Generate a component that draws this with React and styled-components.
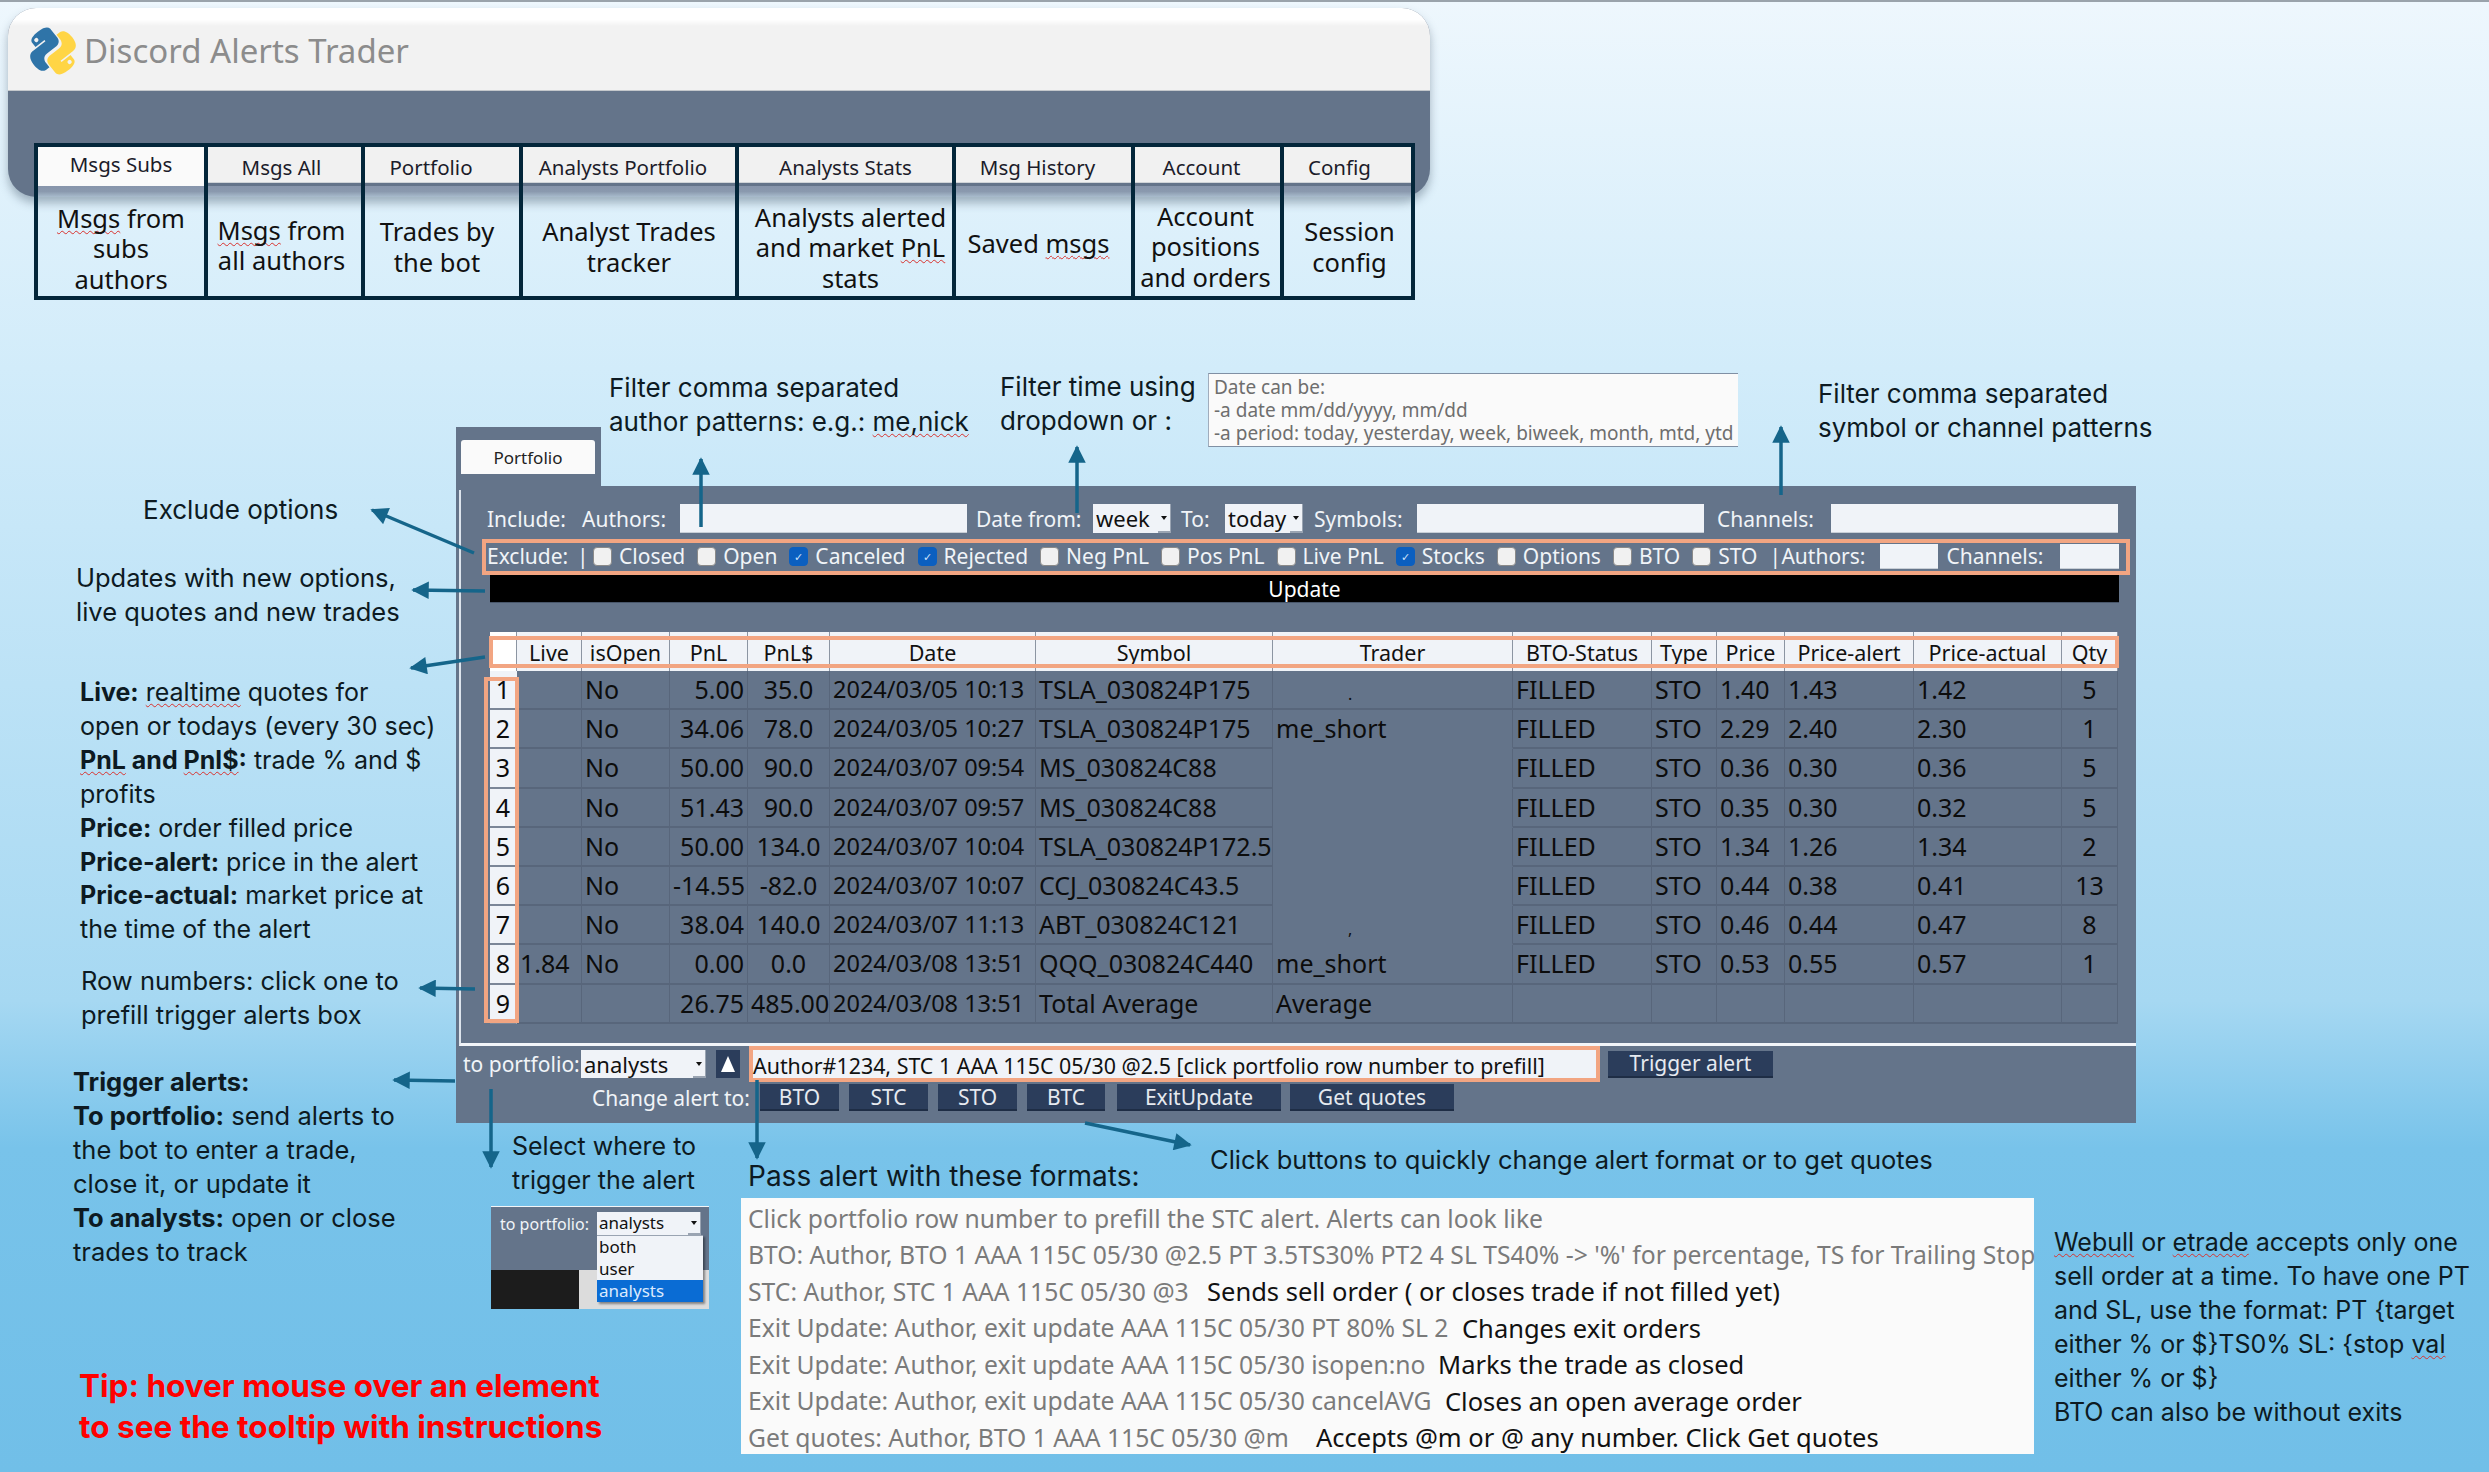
import React from 'react';
import styled, { createGlobalStyle } from 'styled-components';

const UI_FONT = '"Noto Sans", "Open Sans", sans-serif';
const NOTE_FONT = 'Inter, "Noto Sans", sans-serif';
const SLATE = '#64748a';
const ORANGE = '#f2a582';
const ARROW = '#15658a';

const GlobalStyle = createGlobalStyle`
  html, body { margin: 0; padding: 0; }
  body { font-family: ${UI_FONT}; background: #72bfe8; }
`;

// textPad is left, right, top, bottom padding that nudges the description in its cell
const LEGEND = [
  { tab: 'Msgs Subs', w: 170, active: true, tabPad: 0, textPad: [0, 0, 4, 0], text: <><Typo>Msgs</Typo> from<br />subs<br />authors</> },
  { tab: 'Msgs All', w: 157, tabPad: 6, textPad: [0, 6, 0, 3], text: <><Typo>Msgs</Typo> from<br />all authors</> },
  { tab: 'Portfolio', w: 158, tabPad: 22, textPad: [0, 10, 0, 0], text: <>Trades by<br />the bot</> },
  { tab: 'Analysts Portfolio', w: 216, tabPad: 12, textPad: [0, 0, 0, 0], text: <>Analyst Trades<br />tracker</> },
  { tab: 'Analysts Stats', w: 217, tabPad: 0, textPad: [10, 0, 2, 0], text: <>Analysts alerted<br />and market <Typo>PnL</Typo><br />stats</> },
  { tab: 'Msg History', w: 179, tabPad: 12, textPad: [0, 10, 0, 6], text: <>Saved <Typo>msgs</Typo></> },
  { tab: 'Account', w: 149, tabPad: 12, textPad: [0, 4, 0, 0], text: <>Account<br />positions<br />and orders</> },
  { tab: 'Config', w: 131, tabPad: 16, textPad: [4, 0, 0, 0], text: <>Session<br />config</> },
];

const EXCLUDES = [
  ['Closed', false], ['Open', false], ['Canceled', true], ['Rejected', true], ['Neg PnL', false],
  ['Pos PnL', false], ['Live PnL', false], ['Stocks', true], ['Options', false], ['BTO', false], ['STO', false],
];

const COLUMNS = '27px 65px 88px 78px 82px 206px 237px 240px 139px 65px 68px 129px 148px 56px';
const HEADERS = ['', 'Live', 'isOpen', 'PnL', 'PnL$', 'Date', 'Symbol', 'Trader', 'BTO-Status', 'Type', 'Price', 'Price-alert', 'Price-actual', 'Qty'];
const ALIGN = ['center', 'left', 'left', 'right', 'center', 'left', 'left', 'left', 'left', 'left', 'left', 'left', 'left', 'center'];
const DATE_COLUMN = 5;
const TRADER_COLUMN = 7;

const ROWS = [
  ['1', '', 'No', '5.00', '35.0', '2024/03/05 10:13', 'TSLA_030824P175', '', 'FILLED', 'STO', '1.40', '1.43', '1.42', '5'],
  ['2', '', 'No', '34.06', '78.0', '2024/03/05 10:27', 'TSLA_030824P175', 'me_short', 'FILLED', 'STO', '2.29', '2.40', '2.30', '1'],
  ['3', '', 'No', '50.00', '90.0', '2024/03/07 09:54', 'MS_030824C88', '', 'FILLED', 'STO', '0.36', '0.30', '0.36', '5'],
  ['4', '', 'No', '51.43', '90.0', '2024/03/07 09:57', 'MS_030824C88', '', 'FILLED', 'STO', '0.35', '0.30', '0.32', '5'],
  ['5', '', 'No', '50.00', '134.0', '2024/03/07 10:04', 'TSLA_030824P172.5', '', 'FILLED', 'STO', '1.34', '1.26', '1.34', '2'],
  ['6', '', 'No', '-14.55', '-82.0', '2024/03/07 10:07', 'CCJ_030824C43.5', '', 'FILLED', 'STO', '0.44', '0.38', '0.41', '13'],
  ['7', '', 'No', '38.04', '140.0', '2024/03/07 11:13', 'ABT_030824C121', '', 'FILLED', 'STO', '0.46', '0.44', '0.47', '8'],
  ['8', '1.84', 'No', '0.00', '0.0', '2024/03/08 13:51', 'QQQ_030824C440', 'me_short', 'FILLED', 'STO', '0.53', '0.55', '0.57', '1'],
  ['9', '', '', '26.75', '485.00', '2024/03/08 13:51', 'Total Average', 'Average', '', '', '', '', '', ''],
];

// second value is the black hint, third the width the grey sample takes before it
const FORMATS = [
  ['Click portfolio row number to prefill the STC alert. Alerts can look like'],
  ["BTO: Author, BTO 1 AAA 115C 05/30 @2.5 PT 3.5TS30% PT2 4 SL TS40% -> '%' for percentage, TS for Trailing Stop"],
  ['STC: Author, STC 1 AAA 115C 05/30 @3', 'Sends sell order ( or closes trade if not filled yet)', 459],
  ['Exit Update: Author, exit update AAA 115C 05/30 PT 80% SL 2', 'Changes exit orders', 714],
  ['Exit Update: Author, exit update AAA 115C 05/30 isopen:no', 'Marks the trade as closed', 690],
  ['Exit Update: Author, exit update AAA 115C 05/30 cancelAVG', 'Closes an open average order', 697],
  ['Get quotes: Author, BTO 1 AAA 115C 05/30 @m', 'Accepts @m or @ any number. Click Get quotes', 568],
];

const ARROWS = [
  [701, 527, 701, 459], [1077, 513, 1077, 447], [1781, 495, 1781, 427],
  [474, 553, 372, 510], [485, 591, 413, 590], [485, 657, 411, 668],
  [475, 989, 420, 988], [455, 1081, 394, 1080], [491, 1089, 491, 1167],
  [757, 1080, 757, 1158], [1085, 1123, 1190, 1145],
];

function Typo({ children }) {
  return <Squiggle>{children}</Squiggle>;
}

const SNAKE = 'M54.9.9C28.3.9 30 12.5 30 12.5V24.5H55V28H20S3 26 3 52.7s14.8 25.8 14.8 25.8h8.9V66s-.5-14.8 14.6-14.8h25.1s14.1.2 14.1-13.7V14.6S82.7.9 54.9.9zM41 8.9a4.5 4.5 0 1 1 0 9 4.5 4.5 0 0 1 0-9z';

const PythonLogo = () => (
  <LogoSvg viewBox="0 0 110 110">
    <g transform="rotate(-38 55 55)">
      <path fill="#2f74a8" d={SNAKE} />
      <path fill="#ffd545" transform="rotate(180 55 55)" d={SNAKE} />
    </g>
  </LogoSvg>
);

const Arrows = () => (
  <ArrowLayer viewBox="0 0 2489 1472">
    <defs>
      <marker id="head" viewBox="0 0 10 10" refX="9" refY="5" markerWidth="5.5" markerHeight="5" orient="auto">
        <path d="M0 0 L10 5 L0 10 Z" fill={ARROW} />
      </marker>
    </defs>
    {ARROWS.map(([x1, y1, x2, y2]) => (
      <line key={`${x1}-${y1}`} x1={x1} y1={y1} x2={x2} y2={y2} stroke={ARROW} strokeWidth="3.5" markerEnd="url(#head)" />
    ))}
  </ArrowLayer>
);

const Arrowhead = () => (
  <svg width="6" height="5" viewBox="0 0 6 5"><path d="M0 1 H6 L3 5 Z" fill="#111" /></svg>
);

const Legend = () => (
  <LegendGrid>
    {LEGEND.map(item => (
      <LegendColumn key={item.tab} $w={item.w}>
        <TabCell $active={item.active} $pad={item.tabPad}>
          <TabLabel $active={item.active}>{item.tab}</TabLabel>
        </TabCell>
        <TabStrip />
        <LegendText $pad={item.textPad}>
          <div>{item.text}</div>
        </LegendText>
      </LegendColumn>
    ))}
  </LegendGrid>
);

const FilterBar = () => (
  <FilterRow>
    <Label $w={95}>Include:</Label>
    <Label $w={98}>Authors:</Label>
    <TextBox $w={287} />
    <Label $w={117} $ml={9}>Date from:</Label>
    <Select $w={78}>week<Caret><Arrowhead /></Caret></Select>
    <Label $w={44} $ml={10}>To:</Label>
    <Select $w={78}>today<Caret><Arrowhead /></Caret></Select>
    <Label $w={103} $ml={11}>Symbols:</Label>
    <TextBox $w={287} />
    <Label $w={114} $ml={13}>Channels:</Label>
    <TextBox $w={287} />
  </FilterRow>
);

const ExcludeBar = () => (
  <ExcludeRow>
    <Label $w={90}>Exclude:</Label>
    <Label $w={16}>|</Label>
    {EXCLUDES.map(([name, checked]) => (
      <ExcludeItem key={name}>
        <Check $checked={checked}>{checked && '✓'}</Check>
        <Label>{name}</Label>
      </ExcludeItem>
    ))}
    <Label $w={12}>|</Label>
    <Label $w={99}>Authors:</Label>
    <TextBox $w={58} $h={25} />
    <Label $w={114} $ml={8}>Channels:</Label>
    <TextBox $w={59} $h={25} />
  </ExcludeRow>
);

const TradesTable = () => (
  <TableWrap>
    <HeaderRow>
      {HEADERS.map((h, i) => (
        <HeaderCell key={h || 'corner'} $corner={i === 0}>{h}</HeaderCell>
      ))}
    </HeaderRow>
    <RowNumberHighlight />
    {ROWS.map((row, r) => (
      <DataRow key={row[0]}>
        {row.map((value, c) => (
          <DataCell
            key={HEADERS[c] || 'num'}
            $align={ALIGN[c]}
            $index={c === 0}
            $date={c === DATE_COLUMN}
            $noLine={c === TRADER_COLUMN && r > 0 && r < 7}
          >
            {value}
            {c === TRADER_COLUMN && r === 0 && <Tick>.</Tick>}
            {c === TRADER_COLUMN && r === 6 && <Tick>,</Tick>}
          </DataCell>
        ))}
      </DataRow>
    ))}
  </TableWrap>
);

const TriggerBar = () => (
  <>
    <TriggerRow>
      <Label $w={118}>to portfolio:</Label>
      <Select $w={125} $h={28}>analysts<Caret><Arrowhead /></Caret></Select>
      <UpButton><svg width="16" height="18" viewBox="0 0 16 18"><path d="M8 1 L15 17 H1 Z" fill="#fff" /></svg></UpButton>
      <AlertInput>Author#1234, STC 1 AAA 115C 05/30 @2.5 [click portfolio row number to prefill]</AlertInput>
      <ActionButton $w={165} $ml={8}>Trigger alert</ActionButton>
    </TriggerRow>
    <ChangeRow>
      <Label $w={165}>Change alert to:</Label>
      <ActionButton $w={79} $ml={3}>BTO</ActionButton>
      <ActionButton $w={79} $ml={10}>STC</ActionButton>
      <ActionButton $w={79} $ml={10}>STO</ActionButton>
      <ActionButton $w={78} $ml={10}>BTC</ActionButton>
      <ActionButton $w={164} $ml={12}>ExitUpdate</ActionButton>
      <ActionButton $w={164} $ml={9}>Get quotes</ActionButton>
    </ChangeRow>
  </>
);

const DropdownThumb = () => (
  <Thumb>
    <ThumbTop>
      <ThumbLabel>to portfolio:</ThumbLabel>
      <ThumbSelect>analysts<Caret><Arrowhead /></Caret></ThumbSelect>
    </ThumbTop>
    <ThumbBottom>
      <ThumbBlack />
    </ThumbBottom>
    <ThumbMenu>
      <ThumbOption>both</ThumbOption>
      <ThumbOption>user</ThumbOption>
      <ThumbOption $selected>analysts</ThumbOption>
    </ThumbMenu>
  </Thumb>
);

export default function App() {
  return (
    <>
      <GlobalStyle />
      <Canvas>
        <TopLine />
        <AppWindow>
          <TitleBar>
            <PythonLogo />
            <AppTitle>Discord Alerts Trader</AppTitle>
          </TitleBar>
        </AppWindow>
        <Legend />

        <Portfolio>
          <PanelTabBar><PanelTab>Portfolio</PanelTab></PanelTabBar>
          <Panel>
            <Frame>
              <FilterBar />
              <ExcludeBar />
              <UpdateBar>Update</UpdateBar>
              <TradesTable />
            </Frame>
            <TriggerBar />
          </Panel>
        </Portfolio>

        <BottomRow>
          <DropdownThumb />
          <FormatBox>
            {FORMATS.map(([sample, hint, width]) => (
              <FormatLine key={sample}>
                <FormatSample $w={width}>{sample}</FormatSample>
                {hint && <FormatHint>{hint}</FormatHint>}
              </FormatLine>
            ))}
          </FormatBox>
        </BottomRow>

        <DateTip>
          Date can be:<br />-a date mm/dd/yyyy, mm/dd<br />-a period: today, yesterday, week, biweek, month, mtd, ytd
        </DateTip>

        <Note $x={609} $y={371} $size={26}>Filter comma separated<br />author patterns: e.g.: <Squiggle>me,nick</Squiggle></Note>
        <Note $x={1000} $y={370} $size={26}>Filter time using<br />dropdown or :</Note>
        <Note $x={1818} $y={377} $size={26}>Filter comma separated<br />symbol or channel patterns</Note>
        <Note $x={143} $y={493} $size={26}>Exclude options</Note>
        <Note $x={76} $y={561}>Updates with new options,<br />live quotes and new trades</Note>
        <Note $x={80} $y={676} $size={25}>
          <b>Live:</b> <Squiggle>realtime</Squiggle> quotes for<br />
          open or todays (every 30 sec)<br />
          <b><Squiggle>PnL</Squiggle> and <Squiggle>Pnl$</Squiggle>:</b> trade % and $<br />
          profits<br />
          <b>Price:</b> order filled price<br />
          <b>Price-alert:</b> price in the alert<br />
          <b>Price-actual:</b> market price at<br />
          the time of the alert
        </Note>
        <Note $x={81} $y={964}>Row numbers: click one to<br />prefill trigger alerts box</Note>
        <Note $x={73} $y={1065}>
          <b>Trigger alerts:</b><br />
          <b>To portfolio:</b> send alerts to<br />
          the bot to enter a trade,<br />
          close it, or update it<br />
          <b>To analysts:</b> open or close<br />
          trades to track
        </Note>
        <Note $x={512} $y={1130} $size={25}>Select where to<br />trigger the alert</Note>
        <Note $x={748} $y={1160} $size={28}>Pass alert with these formats:</Note>
        <Note $x={1210} $y={1143}>Click buttons to quickly change alert format or to get quotes</Note>
        <Note $x={2054} $y={1226} $size={25}>
          <Squiggle>Webull</Squiggle> or <Squiggle>etrade</Squiggle> accepts only one<br />
          sell order at a time. To have one PT<br />
          and SL, use the format: PT {'{'}target<br />
          either % or ${'}'}TS0% SL: {'{'}stop <Squiggle>val</Squiggle><br />
          either % or ${'}'}<br />
          BTO can also be without exits
        </Note>
        <TipNote>Tip: hover mouse over an element<br />to see the tooltip with instructions</TipNote>

        <Arrows />
      </Canvas>
    </>
  );
}

const Canvas = styled.div`
  position: relative;
  width: 2489px;
  height: 1472px;
  overflow: hidden;
  padding: 8px 0 0 8px;
  box-sizing: border-box;
  background: linear-gradient(180deg, #eef7fd 0%, #d2ecfa 25%, #a6d8f2 68%, #78c3ea 78%, #71bfe8 100%);
`;

const TopLine = styled.div`
  position: absolute;
  left: 0;
  top: 0;
  right: 0;
  height: 2px;
  background: #9aa3ab;
`;

const AppWindow = styled.div`
  width: 1422px;
  height: 189px;
  border-radius: 28px;
  overflow: hidden;
  background: ${SLATE};
  box-shadow: 0 6px 10px rgba(60, 80, 100, 0.4);
`;

const TitleBar = styled.div`
  height: 83px;
  display: flex;
  align-items: center;
  gap: 6px;
  padding: 3px 0 0 20px;
  box-sizing: border-box;
  background: linear-gradient(180deg, #ffffff 0%, #ffffff 14%, #f2f2f2 22%, #f2f2f2 100%);
  border-bottom: 1px solid #c4c8cc;
`;

const LogoSvg = styled.svg`
  width: 50px;
  height: 50px;
  flex: none;
`;

const AppTitle = styled.div`
  font-size: 33px;
  color: #8c8c8c;
`;

const LegendGrid = styled.div`
  position: relative;
  display: flex;
  margin: -54px 0 0 26px;
  width: max-content;
  border-top: 4px solid #03263a;
  border-left: 4px solid #03263a;
  border-bottom: 4px solid #03263a;
`;

const LegendColumn = styled.div`
  width: ${p => p.$w}px;
  height: 149px;
  flex: none;
  box-sizing: border-box;
  border-right: 4px solid #03263a;
  display: flex;
  flex-direction: column;
`;

const TabCell = styled.div`
  flex: none;
  box-sizing: border-box;
  height: ${p => (p.$active ? 39 : 36)}px;
  margin-bottom: ${p => (p.$active ? 0 : 3)}px;
  padding-right: ${p => p.$pad}px;
  display: flex;
  align-items: center;
  justify-content: center;
  background: ${p => (p.$active ? '#fafafa' : '#f1f1f1')};
  border-bottom: ${p => (p.$active ? 0 : '1px solid #d0d4d8')};
`;

const TabLabel = styled.span`
  font-size: 20.5px;
  color: #1c1c2a;
  white-space: nowrap;
  position: relative;
  top: ${p => (p.$active ? -3 : 2)}px;
`;

const TabStrip = styled.div`
  flex: none;
  height: 11px;
  background: linear-gradient(180deg, #8795ab 0%, #8a99ae 50%, #a9bccd 100%);
`;

const LegendText = styled.div`
  flex: 1;
  min-height: 0;
  display: flex;
  align-items: center;
  justify-content: center;
  padding: ${p => p.$pad[2]}px ${p => p.$pad[1]}px ${p => p.$pad[3]}px ${p => p.$pad[0]}px;
  text-align: center;
  font-size: 25.5px;
  line-height: 30.5px;
  color: #111;
  white-space: nowrap;
`;

const Squiggle = styled.span`
  text-decoration: underline wavy #d8322e 1px;
  text-underline-offset: 2px;
  text-decoration-skip-ink: none;
`;

const Portfolio = styled.section`
  margin: 127px 0 0 448px;
  width: 1680px;
`;

const PanelTabBar = styled.div`
  width: 145px;
  height: 59px;
  background: ${SLATE};
  box-sizing: border-box;
  padding: 13px 6px 12px 5px;
`;

const PanelTab = styled.div`
  height: 34px;
  display: flex;
  align-items: center;
  justify-content: center;
  font-size: 17px;
  color: #222;
  background: #fafafa;
  border-radius: 3px 3px 0 0;
`;

const Panel = styled.div`
  width: 1680px;
  height: 637px;
  background: ${SLATE};
  padding-top: 4px;
  box-sizing: border-box;
`;

const Frame = styled.div`
  margin-left: 3px;
  height: 556px;
  box-sizing: border-box;
  border-left: 2px solid #dde4ec;
  border-bottom: 3px solid #f2f5f9;
  padding-top: 14px;
`;

const FilterRow = styled.div`
  display: flex;
  align-items: center;
  height: 29px;
  padding-left: 26px;
`;

const Label = styled.span`
  flex: none;
  font-size: 21px;
  color: #f1f4f8;
  white-space: nowrap;
  ${p => p.$w && `width: ${p.$w}px;`}
  ${p => p.$ml && `margin-left: ${p.$ml}px;`}
`;

const TextBox = styled.div`
  flex: none;
  width: ${p => p.$w}px;
  height: ${p => p.$h || 29}px;
  background: #f0f3f8;
  box-sizing: border-box;
  border-bottom: 1px solid #c8ced6;
`;

const Select = styled.div`
  position: relative;
  flex: none;
  width: ${p => p.$w}px;
  height: ${p => p.$h || 29}px;
  background: #f0f3f8;
  box-sizing: border-box;
  padding-left: 3px;
  font-size: 22px;
  line-height: 28px;
  color: #111;
`;

const Caret = styled.span`
  position: absolute;
  right: 0;
  top: 0;
  bottom: 0;
  width: 12px;
  display: flex;
  align-items: center;
  justify-content: center;
  background: #f0f3f8;
  border-right: 1px solid #9aa4b2;
  border-bottom: 2px solid #9aa4b2;
`;

const ExcludeRow = styled.div`
  display: flex;
  align-items: center;
  margin: 6px 0 0 21px;
  width: 1648px;
  height: 36px;
  box-sizing: border-box;
  border: 4px solid ${ORANGE};
  padding: 0 0 2px 1px;
`;

const ExcludeItem = styled.div`
  display: flex;
  align-items: center;
  gap: 7px;
  margin-right: 12px;
`;

const Check = styled.span`
  width: 19px;
  height: 19px;
  box-sizing: border-box;
  flex: none;
  border-radius: 4px;
  background: ${p => (p.$checked ? '#0b5fc0' : '#f1f1f1')};
  border: 1px solid ${p => (p.$checked ? '#0b5fc0' : '#8a8a8a')};
  color: #cfe2fa;
  font-size: 11px;
  line-height: 17px;
  text-align: center;
`;

const UpdateBar = styled.div`
  margin-left: 29px;
  width: 1629px;
  height: 28px;
  background: #000;
  color: #fff;
  font-size: 21px;
  line-height: 28px;
  text-align: center;
  border-bottom: 1px solid #48566a;
  box-sizing: border-box;
`;

const TableWrap = styled.div`
  position: relative;
  margin: 29px 0 0 29px;
  width: 1628px;
`;

const HeaderRow = styled.div`
  position: relative;
  display: grid;
  grid-template-columns: ${COLUMNS};
  height: 39px;
  background: #f0f3f8;
  &::after {
    content: '';
    position: absolute;
    inset: 4px -1px 3px -1px;
    border: 4px solid ${ORANGE};
    pointer-events: none;
  }
`;

const HeaderCell = styled.div`
  display: flex;
  align-items: center;
  justify-content: center;
  font-size: 21.5px;
  color: #111;
  box-sizing: border-box;
  background: ${p => (p.$corner ? '#fff' : 'transparent')};
  border-right: 1px solid #8c95a2;
  padding-top: 2px;
`;

const RowNumberHighlight = styled.div`
  position: absolute;
  left: -6px;
  top: 45px;
  width: 35px;
  height: 346px;
  box-sizing: border-box;
  border: 4px solid ${ORANGE};
  pointer-events: none;
  z-index: 1;
`;

const DataRow = styled.div`
  display: grid;
  grid-template-columns: ${COLUMNS};
  height: 39.2px;
`;

const DataCell = styled.div`
  position: relative;
  box-sizing: border-box;
  padding: 0 3px;
  font-size: ${p => (p.$date ? 23.5 : 25)}px;
  line-height: 37px;
  white-space: nowrap;
  color: #0c0c0c;
  text-align: ${p => p.$align};
  background: ${p => (p.$index ? '#f0f3f8' : 'transparent')};
  border-right: 1px solid ${p => (p.$index ? '#f0f3f8' : '#58667b')};
  border-bottom: ${p => (p.$noLine ? '2px solid transparent' : p.$index ? '2px solid #7b8697' : '2px solid #58667b')};
`;

const Tick = styled.span`
  position: absolute;
  left: 75px;
  bottom: 6px;
  font-size: 16px;
  line-height: 1;
`;

const TriggerRow = styled.div`
  display: flex;
  align-items: center;
  height: 36px;
  padding-left: 7px;
`;

const UpButton = styled.div`
  flex: none;
  width: 24px;
  height: 28px;
  margin-left: 10px;
  display: flex;
  align-items: center;
  justify-content: center;
  background: #2b3d5b;
`;

const AlertInput = styled.div`
  flex: none;
  width: 851px;
  height: 36px;
  margin-left: 9px;
  padding: 4px 0 0 0;
  box-sizing: border-box;
  background: #f0f3f8;
  border: 4px solid ${ORANGE};
  font-size: 21.4px;
  line-height: 24px;
  color: #111;
  white-space: nowrap;
`;

const ActionButton = styled.button`
  flex: none;
  width: ${p => p.$w}px;
  height: 27px;
  margin-left: ${p => p.$ml || 0}px;
  padding: 0;
  background: #2b3d5b;
  border: 0;
  border-bottom: 2px solid #1e2d45;
  color: #e6eaf0;
  font-family: ${UI_FONT};
  font-size: 21px;
  line-height: 24px;
`;

const ChangeRow = styled.div`
  display: flex;
  align-items: center;
  height: 27px;
  margin-top: 2px;
  padding-left: 136px;
`;

const BottomRow = styled.div`
  display: flex;
  margin: 75px 0 0 483px;
  gap: 32px;
`;

const Thumb = styled.div`
  position: relative;
  width: 218px;
  height: 103px;
  margin-top: 8px;
  flex: none;
`;

const ThumbTop = styled.div`
  height: 64px;
  background: ${SLATE};
  display: flex;
  align-items: flex-start;
  padding: 5px 0 0 9px;
  box-sizing: border-box;
  border-top: 1px solid #f4f6f8;
`;

const ThumbLabel = styled.span`
  width: 97px;
  flex: none;
  font-size: 16px;
  line-height: 24px;
  color: #f1f4f8;
  white-space: nowrap;
`;

const ThumbSelect = styled.div`
  position: relative;
  width: 104px;
  height: 23px;
  background: #f0f3f8;
  font-size: 17px;
  line-height: 22px;
  padding-left: 2px;
  box-sizing: border-box;
  color: #111;
`;

const ThumbBottom = styled.div`
  height: 39px;
  background: #dcdcdc;
`;

const ThumbBlack = styled.div`
  width: 88px;
  height: 100%;
  background: #1c1c1c;
`;

const ThumbMenu = styled.div`
  position: absolute;
  left: 106px;
  top: 29px;
  width: 106px;
  background: #f0f3f8;
  box-shadow: 2px 2px 2px rgba(0, 0, 0, 0.4);
  border-top: 1px solid #9aa4b2;
`;

const ThumbOption = styled.div`
  height: 22px;
  padding-left: 2px;
  font-size: 17px;
  line-height: 21px;
  color: ${p => (p.$selected ? '#dbeafe' : '#111')};
  background: ${p => (p.$selected ? '#0a6cd4' : 'transparent')};
`;

const FormatBox = styled.div`
  width: 1293px;
  height: 256px;
  flex: none;
  box-sizing: border-box;
  padding: 2px 0 0 7px;
  background: #fafafa;
`;

const FormatLine = styled.div`
  display: flex;
  height: 36.5px;
  align-items: center;
  font-size: 24.7px;
  color: #7a7a7a;
  white-space: nowrap;
`;

const FormatSample = styled.span`
  ${p => p.$w && `width: ${p.$w}px; flex: none;`}
`;

const FormatHint = styled.span`
  color: #111;
  font-size: 25.5px;
`;

const DateTip = styled.div`
  position: absolute;
  left: 1208px;
  top: 373px;
  width: 530px;
  height: 74px;
  box-sizing: border-box;
  padding: 2px 0 0 5px;
  background: #fafafa;
  border-top: 1px solid #8090a4;
  border-bottom: 1px solid #8090a4;
  border-left: 1px solid #a0acbc;
  font-size: 19px;
  line-height: 23px;
  color: #6e6e6e;
  white-space: nowrap;
`;

const Note = styled.div`
  position: absolute;
  left: ${p => p.$x}px;
  top: ${p => p.$y}px;
  font-family: ${NOTE_FONT};
  font-size: ${p => p.$size || 25.5}px;
  line-height: 33.9px;
  color: #0d1a22;
  white-space: nowrap;
  b { font-weight: 700; }
`;

const TipNote = styled.div`
  position: absolute;
  left: 79px;
  top: 1365px;
  font-family: ${NOTE_FONT};
  font-size: 31.5px;
  line-height: 41px;
  font-weight: 700;
  color: #ff0000;
  white-space: nowrap;
`;

const ArrowLayer = styled.svg`
  position: absolute;
  left: 0;
  top: 0;
  width: 2489px;
  height: 1472px;
  pointer-events: none;
`;
